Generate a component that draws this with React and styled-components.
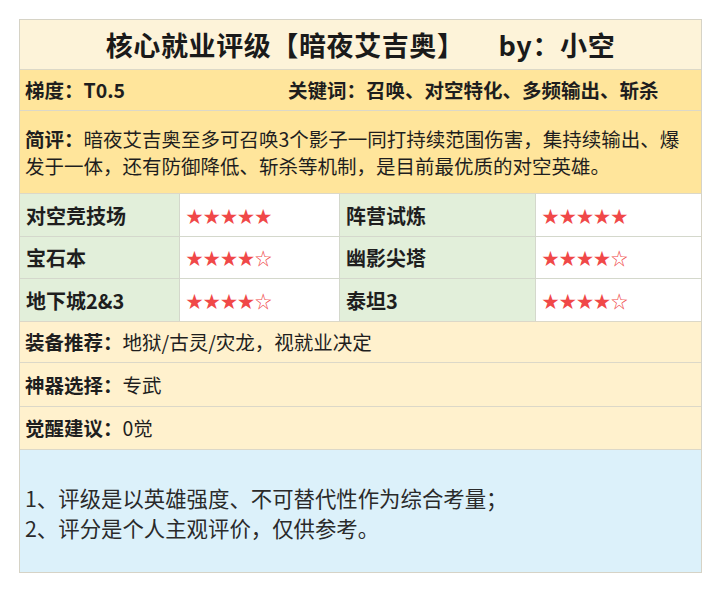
import React from "react";
import styled, { createGlobalStyle } from "styled-components";

const GlobalStyle = createGlobalStyle`
  * { box-sizing: border-box; }
  body {
    margin: 0;
    background: #ffffff;
    font-family: "Noto Sans CJK SC", "Noto Sans", sans-serif;
    color: #1e1e1e;
  }
`;

const Page = styled.div`
  padding: 19px 0 0 19px;
`;

const Card = styled.div`
  width: 683px;
  border: 1px solid #d6d3c6;
  display: flex;
  flex-direction: column;
`;

const Row = styled.div`
  background: ${(p) => p.$bg};
  min-height: ${(p) => p.$h}px;
  border-top: ${(p) => (p.$first ? "none" : "1px solid #dcd8c8")};
  padding: ${(p) => p.$pad || "0 5px"};
  display: flex;
  align-items: center;
  font-size: 19.5px;
  line-height: 27.5px;
`;

const Title = styled(Row)`
  justify-content: center;
  font-size: 27px;
  font-weight: 700;
  letter-spacing: 0.6px;
  color: #1a1a1a;
`;

const Author = styled.span`
  margin-left: 34px;
`;

const TwoCol = styled.div`
  display: grid;
  grid-template-columns: 263px 1fr;
  width: 100%;
  font-weight: 700;
`;

const Label = styled.b`
  font-weight: 700;
`;

const Ratings = styled.div`
  display: grid;
  grid-template-columns: 159px 160px 196px 1fr;
  border-top: 1px solid #dcd8c8;
`;

const Cell = styled.div`
  height: ${(p) => p.$h}px;
  display: flex;
  align-items: center;
  padding: 0 6px;
  background: ${(p) => (p.$stars ? "#ffffff" : "#e2efda")};
  border-top: ${(p) => (p.$top ? "none" : "1px solid #d4d8cc")};
  border-left: ${(p) => (p.$left ? "none" : "1px solid #d4d8cc")};
  font-size: ${(p) => (p.$stars ? "17px" : "20px")};
  font-weight: ${(p) => (p.$stars ? 400 : 700)};
  color: ${(p) => (p.$stars ? "#f04848" : "#1e1e1e")};
  letter-spacing: ${(p) => (p.$stars ? "0.2px" : "0")};
`;

const Notes = styled(Row)`
  background: #dcf1fa;
  flex-direction: column;
  align-items: flex-start;
  justify-content: center;
  font-size: 21.4px;
  line-height: 30px;
  color: #2a2a2a;
  padding-top: 4px;
`;

const ratings = [
  ["对空竞技场", 5, "阵营试炼", 5],
  ["宝石本", 4, "幽影尖塔", 4],
  ["地下城2&3", 4, "泰坦3", 4],
];

const stars = (n) => "★".repeat(n) + "☆".repeat(5 - n);

const rowHeights = [42, 42, 43];

export default function App() {
  return (
    <Page>
      <GlobalStyle />
      <Card>
        <Title $bg="#fdf3d9" $h={49} $first>
          核心就业评级【暗夜艾吉奥】<Author>by：小空</Author>
        </Title>
        <Row $bg="#ffe59b" $h={41}>
          <TwoCol>
            <span>梯度：T0.5</span>
            <span>关键词：召唤、对空特化、多频输出、斩杀</span>
          </TwoCol>
        </Row>
        <Row $bg="#ffe59b" $h={83} $pad="13px 12px 13px 5px">
          <p style={{ margin: 0 }}>
            <Label>简评：</Label>
            <span>暗夜艾吉奥至多可召唤3个影子一同打持续范围伤害，集持续输出、爆发于一体，还有防御降低、斩杀等机制，是目前最优质的对空英雄。</span>
          </p>
        </Row>
        <Ratings>
          {ratings.map(([a, an, b, bn], i) => (
            <React.Fragment key={a}>
              <Cell $h={rowHeights[i]} $top={i === 0} $left>{a}</Cell>
              <Cell $h={rowHeights[i]} $top={i === 0} $stars>{stars(an)}</Cell>
              <Cell $h={rowHeights[i]} $top={i === 0}>{b}</Cell>
              <Cell $h={rowHeights[i]} $top={i === 0} $stars>{stars(bn)}</Cell>
            </React.Fragment>
          ))}
        </Ratings>
        <Row $bg="#fff1cd" $h={41}>
          <div><Label>装备推荐：</Label><span>地狱/古灵/灾龙，视就业决定</span></div>
        </Row>
        <Row $bg="#fff1cd" $h={44}>
          <div><Label>神器选择：</Label><span>专武</span></div>
        </Row>
        <Row $bg="#fff1cd" $h={43}>
          <div><Label>觉醒建议：</Label><span>0觉</span></div>
        </Row>
        <Notes $h={123}>
          <div>1、评级是以英雄强度、不可替代性作为综合考量；</div>
          <div>2、评分是个人主观评价，仅供参考。</div>
        </Notes>
      </Card>
    </Page>
  );
}
